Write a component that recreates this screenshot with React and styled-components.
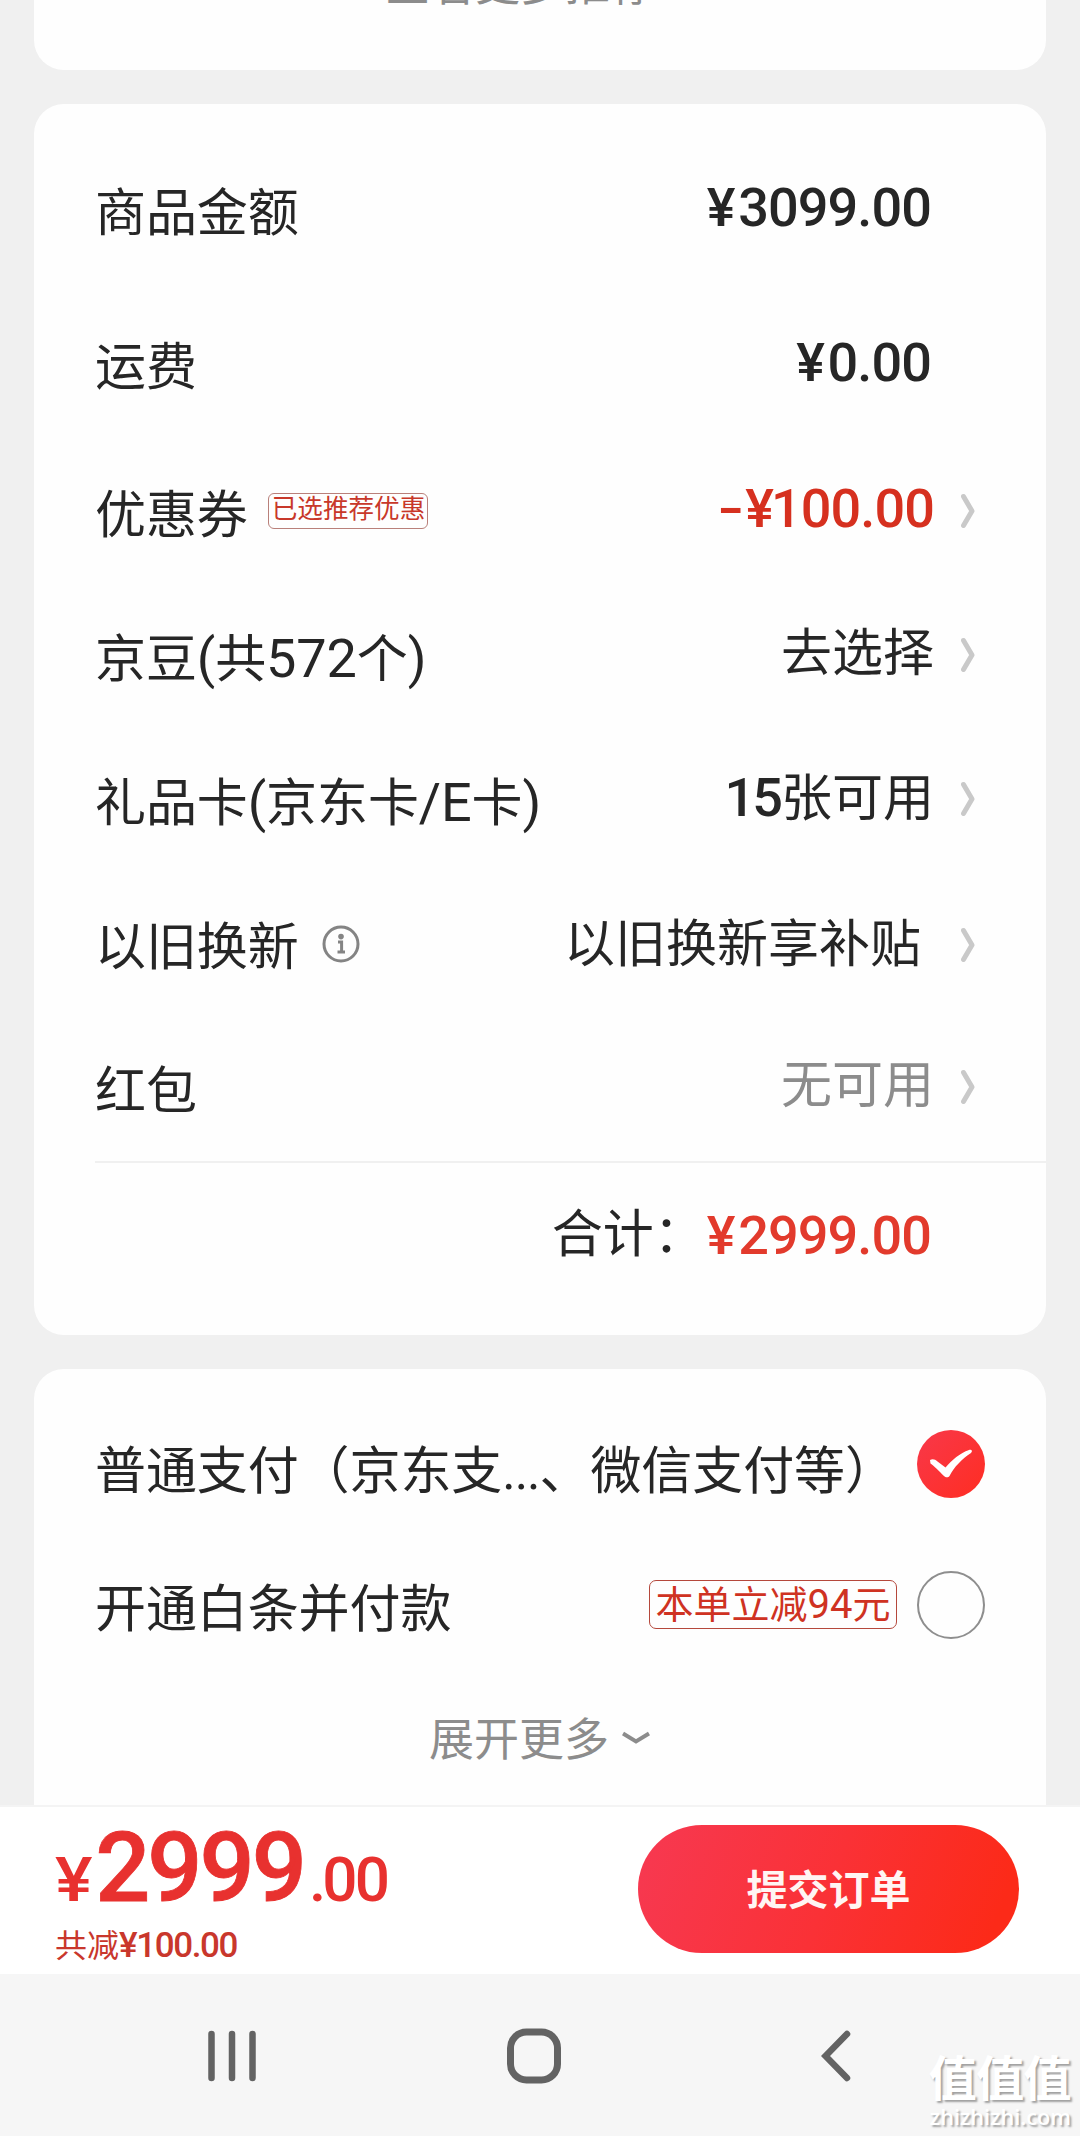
import React from "react";
import styled, { createGlobalStyle } from "styled-components";

const GlobalStyle = createGlobalStyle`
  * { box-sizing: border-box; }
  body {
    margin: 0;
    background: #f0f0f0;
    font-family: Roboto, "Noto Sans CJK SC", sans-serif;
    color: #262626;
  }
`;

const Screen = styled.div`
  width: 1080px;
  height: 2136px;
  display: flex;
  flex-direction: column;
  overflow: hidden;
  position: relative;
`;

const Content = styled.main`
  height: 1805px;
  padding: 0 34px;
  display: flex;
  flex-direction: column;
  gap: 34px;
  overflow: hidden;
`;

const Card = styled.section`
  flex: none;
  height: ${(p) => p.$height}px;
  padding-top: ${(p) => p.$top || 0}px;
  background: #fefefe;
  border-radius: ${(p) => p.$radius || "30px"};
`;

const MoreRecommend = styled.div`
  margin: -41px 0 0 351px;
  font-size: 45px;
  line-height: 54px;
  white-space: nowrap;
  color: #8c8c8c;
`;

const Row = styled.div`
  height: ${(p) => p.$height}px;
  padding: 0 71px 0 61px;
  display: flex;
  align-items: center;
  justify-content: space-between;
`;

const Label = styled.div`
  display: flex;
  align-items: center;
  padding-top: ${(p) => p.$drop ?? 1}px;
  font-size: 51px;
  line-height: 60px;
  letter-spacing: -0.1px;
  white-space: nowrap;
`;

const Latin = styled.span`
  font-size: 54px;
`;

const Dots = styled.span`
  letter-spacing: -1px;
`;

const Side = styled.div`
  display: flex;
  align-items: center;
`;

const Value = styled.div`
  padding-bottom: ${(p) => p.$lift}px;
  margin-right: ${(p) => p.$gap}px;
  font-size: 51px;
  line-height: 60px;
  color: ${(p) => p.$color || "inherit"};
  white-space: nowrap;
`;

const Price = styled.span`
  font-size: 54px;
  font-weight: 500;
  letter-spacing: -0.9px;
`;

const Yen = styled.span`
  display: inline-block;
  margin-right: ${(p) => p.$after}px;
  transform: scaleX(${(p) => p.$stretch || 1});
  transform-origin: left;
`;

const Minus = styled.span`
  display: inline-block;
  margin-right: 3px;
  transform: scaleX(1.4);
  transform-origin: right;
`;

const Count = styled(Price)`
  letter-spacing: -3px;
  margin-right: 1px;
`;

const ArrowBox = styled.span`
  display: flex;
  padding-bottom: ${(p) => p.$lift}px;
`;

const CouponTag = styled.span`
  height: 36px;
  margin: 0 0 10px 20px;
  padding: 0 2px 3px 3px;
  display: flex;
  align-items: center;
  border: 1px solid #b9807a;
  border-radius: 6px;
  font-size: 25.6px;
  line-height: 33px;
  letter-spacing: 0;
  color: #c8382a;
`;

const InfoBox = styled.span`
  display: flex;
  margin: 0 0 9px 23px;
`;

const Divider = styled.div`
  height: 2px;
  margin-left: 61px;
  background: #f0f0f0;
`;

const TotalRow = styled.div`
  height: 147px;
  padding-right: 115px;
  display: flex;
  align-items: center;
  justify-content: flex-end;
`;

const TotalLabel = styled.span`
  padding-bottom: 3px;
  font-size: 51px;
  line-height: 60px;
  width: 155px;
  white-space: nowrap;
`;

const PayRow = styled.div`
  height: 138px;
  padding: 0 61px;
  display: flex;
  align-items: center;
  justify-content: space-between;
`;

const PaySide = styled.div`
  display: flex;
  align-items: center;
  gap: 20px;
  padding-bottom: ${(p) => p.$lift}px;
`;

const DiscountTag = styled.span`
  width: 248px;
  height: 49px;
  display: flex;
  align-items: center;
  justify-content: center;
  border: 1px solid #b5483c;
  border-radius: 7px;
  font-size: 38px;
  line-height: 46px;
  white-space: nowrap;
  color: #cf3222;
`;

const DiscountNumber = styled.span`
  font-size: 40px;
`;

const Radio = styled.span`
  width: 68px;
  height: 68px;
  border-radius: 50%;
  display: flex;
  align-items: center;
  justify-content: center;
  border: ${(p) => (p.$checked ? "none" : "2px solid #8e8e8e")};
  background: ${(p) => (p.$checked ? "linear-gradient(135deg, #f8384a, #ff2d22)" : "transparent")};
`;

const Expand = styled.div`
  height: 120px;
  padding-left: 395px;
  display: flex;
  align-items: center;
  gap: 13px;
  font-size: 45px;
  line-height: 54px;
  color: #8c8c8c;
`;

const ExpandText = styled.span`
  padding-top: 6px;
`;

const Footer = styled.footer`
  height: 169px;
  flex: none;
  padding: 0 61px 0 55px;
  border-top: 2px solid #f4f4f4;
  background: #ffffff;
  display: flex;
  justify-content: space-between;
`;

const Sum = styled.div`
  display: flex;
  flex-direction: column;
  color: #e8312f;
  white-space: nowrap;
`;

const Amount = styled.div`
  height: 114px;
  line-height: 114px;
  font-size: 62px;
  font-weight: 500;
  letter-spacing: -2.8px;
  padding-top: 4px;
`;

const AmountMain = styled.span`
  margin-right: 5px;
  font-size: 97px;
  letter-spacing: -2.9px;
  -webkit-text-stroke: 0.8px currentColor;
`;

const Point = styled.span`
  letter-spacing: -4px;
`;

const Saved = styled.div`
  font-size: 32px;
  line-height: 50px;
  color: #c9372c;
`;

const SavedPrice = styled.span`
  font-size: 35px;
  font-weight: 500;
  letter-spacing: -1.4px;
`;

const Submit = styled.button`
  width: 381px;
  height: 128px;
  margin-top: 18px;
  padding: 4px 0 0;
  border: 0;
  border-radius: 64px;
  background: linear-gradient(110deg, #f7384f 5%, #fa3136 50%, #fc2a18 92%);
  color: #fff5f3;
  font: 700 41px/124px Roboto, "Noto Sans CJK SC", sans-serif;
`;

const NavBar = styled.nav`
  height: 162px;
  flex: none;
  padding: 54px 229px 0 208px;
  display: flex;
  justify-content: space-between;
  align-items: flex-start;
  background: #f6f6f6;
`;

const HomeIcon = styled.svg`
  margin-right: 9px;
`;

const Watermark = styled.div`
  position: absolute;
  right: 9px;
  bottom: 4px;
  display: flex;
  flex-direction: column;
  align-items: flex-end;
  color: #ffffff;
  text-shadow: 2px 2px 2px #a0a0a0;
  white-space: nowrap;
`;

const WatermarkName = styled.span`
  font: 700 48px/53px "Noto Sans CJK SC", sans-serif;
  letter-spacing: -0.6px;
`;

const WatermarkUrl = styled.span`
  font: 600 21.7px/30px "Open Sans", sans-serif;
`;

const Arrow = ({ lift }) => (
  <ArrowBox $lift={lift}>
    <svg width="14" height="36" viewBox="0 0 14 36" fill="none" stroke="#c9c9c9" strokeWidth="5" strokeLinecap="round" strokeLinejoin="round">
      <path d="M2.500 3.500 11 18 2.500 32.500" />
    </svg>
  </ArrowBox>
);

const InfoIcon = () => (
  <InfoBox>
    <svg width="38" height="38" viewBox="0 0 38 38" fill="none" stroke="#848484">
      <circle cx="19" cy="19" r="17" strokeWidth="3" />
      <circle cx="19" cy="11.600" r="2.800" fill="#848484" stroke="none" />
      <path d="M16 17h3.600v10M15.500 27h7.500" strokeWidth="3" />
    </svg>
  </InfoBox>
);

const Money = ({ amount, negative }) => (
  <Price>
    {negative && <Minus>-</Minus>}
    <Yen $after={amount.startsWith("1") ? -2 : 3.5}>¥</Yen>
    {amount}
  </Price>
);

const rows = [
  { id: "goods", label: "商品金额", height: 155, amount: "3099.00", lift: 8, drop: 2 },
  { id: "freight", label: "运费", height: 155, amount: "0.00", lift: 8 },
  { id: "coupon", label: "优惠券", height: 142, tag: "已选推荐优惠", amount: "100.00", negative: true, color: "#d6301f", lift: 13, arrow: 10, drop: 0 },
  { id: "beans", label: <span>京豆<Latin>(</Latin>共<Latin>572</Latin>个<Latin>)</Latin></span>, height: 144, text: "去选择", lift: 10, arrow: 8 },
  { id: "card", label: <span>礼品卡<Latin>(</Latin>京东卡<Latin>/E</Latin>卡<Latin>)</Latin></span>, height: 144, count: "15", text: "张可用", lift: 9, arrow: 8 },
  { id: "trade", label: "以旧换新", height: 143, info: true, text: "以旧换新享补贴", lift: 3, arrow: 3, gap: 40, drop: 3 },
  { id: "packet", label: "红包", height: 143, text: "无可用", color: "#8c8c8c", lift: 8, arrow: 6, drop: 4 },
];

export default function App() {
  return (
    <Screen>
      <GlobalStyle />
      <Content>
        <Card $height={70} $radius="0 0 30px 30px">
          <MoreRecommend>查看更多推荐</MoreRecommend>
        </Card>

        <Card $height={1231} $top={31}>
          {rows.map((r) => (
            <Row key={r.id} $height={r.height}>
              <Label $drop={r.drop}>
                {r.label}
                {r.tag && <CouponTag>{r.tag}</CouponTag>}
                {r.info && <InfoIcon />}
              </Label>
              <Side>
                <Value $lift={r.lift} $color={r.color} $gap={r.arrow ? r.gap || 27 : 44}>
                  {r.amount && <Money amount={r.amount} negative={r.negative} />}
                  {r.count && <Count>{r.count}</Count>}
                  {r.text}
                </Value>
                {r.arrow && <Arrow lift={r.arrow} />}
              </Side>
            </Row>
          ))}
          <Divider />
          <TotalRow>
            <TotalLabel>合计：</TotalLabel>
            <Value $lift={0} $gap={0} $color="#e23a2c">
              <Money amount="2999.00" />
            </Value>
          </TotalRow>
        </Card>

        <Card $height={480} $top={33}>
          <PayRow>
            <Label>
              <span>普通支付（京东支<Dots>...</Dots>、微信支付等）</span>
            </Label>
            <PaySide $lift={14}>
              <Radio $checked>
                <svg width="46" height="32" viewBox="0 0 46 32" fill="#fff">
                  <path d="M2 12c3-1.500 5-.5 7.500 1.500l8 6C24 12 32 5 41 2c2.500-.7 4 1 2 3C34 11 26 19 21.500 28c-1 1.800-4 1.800-5.500 0C11 23 6 18 2.500 15.500z" />
                </svg>
              </Radio>
            </PaySide>
          </PayRow>
          <PayRow>
            <Label>开通白条并付款</Label>
            <PaySide $lift={9}>
              <DiscountTag>
                本单立减<DiscountNumber>94</DiscountNumber>元
              </DiscountTag>
              <Radio />
            </PaySide>
          </PayRow>
          <Expand>
            <ExpandText>展开更多</ExpandText>
            <svg width="28" height="14" viewBox="0 0 28 14" fill="none" stroke="#8c8c8c" strokeWidth="4">
              <path d="M1 2.500 14 10.500 27 2.500" />
            </svg>
          </Expand>
        </Card>
      </Content>

      <Footer>
        <Sum>
          <Amount>
            <Yen $after={10} $stretch={1.14}>¥</Yen>
            <AmountMain>2999</AmountMain>
            <Point>.</Point>00
          </Amount>
          <Saved>
            共减<SavedPrice>¥100.00</SavedPrice>
          </Saved>
        </Sum>
        <Submit>提交订单</Submit>
      </Footer>

      <NavBar>
        <svg width="48" height="55" viewBox="0 0 48 55" stroke="#636363" strokeWidth="6.500" strokeLinecap="round">
          <path d="M3.500 6v44M24 6v44M44.500 6v44" />
        </svg>
        <HomeIcon width="54" height="56" viewBox="0 0 54 56" fill="none" stroke="#636363" strokeWidth="7">
          <rect x="3.500" y="4" width="47" height="48" rx="16" />
        </HomeIcon>
        <svg width="30" height="55" viewBox="0 0 30 55" fill="none" stroke="#636363" strokeWidth="6.500" strokeLinecap="round">
          <path d="M26 6 4.500 28 26 50" />
        </svg>
      </NavBar>

      <Watermark>
        <WatermarkName>值值值</WatermarkName>
        <WatermarkUrl>zhizhizhi.com</WatermarkUrl>
      </Watermark>
    </Screen>
  );
}
